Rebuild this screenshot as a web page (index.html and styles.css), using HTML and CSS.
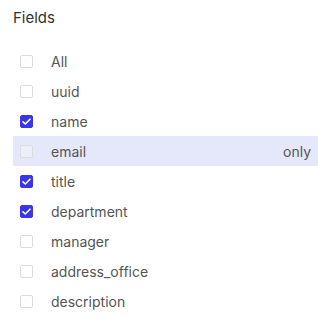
FILE: index.html
```html
<!DOCTYPE html>
<html lang="en">
<head>
  <meta charset="UTF-8" />
  <title>Fields</title>
  <link rel="stylesheet" href="styles.css">
</head>
<body>
  <div class="panel">
    <h2 class="title">Fields</h2>
    <ul class="field-list">
      <li class="field"><span class="box"></span><span class="label">All</span></li>
      <li class="field"><span class="box"></span><span class="label">uuid</span></li>
      <li class="field checked"><span class="box"></span><span class="label">name</span></li>
      <li class="field hover"><span class="box"></span><span class="label">email</span><span class="only">only</span></li>
      <li class="field checked"><span class="box"></span><span class="label">title</span></li>
      <li class="field checked"><span class="box"></span><span class="label">department</span></li>
      <li class="field"><span class="box"></span><span class="label">manager</span></li>
      <li class="field"><span class="box"></span><span class="label">address_office</span></li>
      <li class="field"><span class="box"></span><span class="label">description</span></li>
    </ul>
  </div>
</body>
</html>
```

FILE: styles.css
```css
body {
  margin: 0;
  font-family: Inter, 'Noto Sans', sans-serif;
  background: #fff;
  color: #555;
}

.panel {
  padding: 8px 0 0 13px;
}

.title {
  margin: 0;
  font-size: 15px;
  font-weight: 400;
  line-height: 20px;
  color: #333;
}

.field-list {
  list-style: none;
  margin: 18px 0 0;
  padding: 0;
}

.field {
  display: flex;
  align-items: center;
  height: 30px;
  padding: 0 7px;
  font-size: 14px;
}

.field.hover {
  background: #e5e8fb;
}

.box {
  width: 11px;
  height: 11px;
  border: 1px solid #dcdcdc;
  border-radius: 2px;
  margin-right: 18px;
  flex-shrink: 0;
  background: #fff;
}

.field.hover .box {
  background: #eceefa;
}

.field.checked .box {
  border-color: #3a35e8;
  background: #3a35e8 url("data:image/svg+xml,%3Csvg xmlns='http://www.w3.org/2000/svg' viewBox='0 0 13 13'%3E%3Cpath d='M3 6.8l2.3 2.2L10 4.2' fill='none' stroke='white' stroke-width='1.6' stroke-linecap='round' stroke-linejoin='round'/%3E%3C/svg%3E") center / 13px 13px no-repeat;
}

.label {
  flex: 1;
}

.only {
  color: #555;
}
```
